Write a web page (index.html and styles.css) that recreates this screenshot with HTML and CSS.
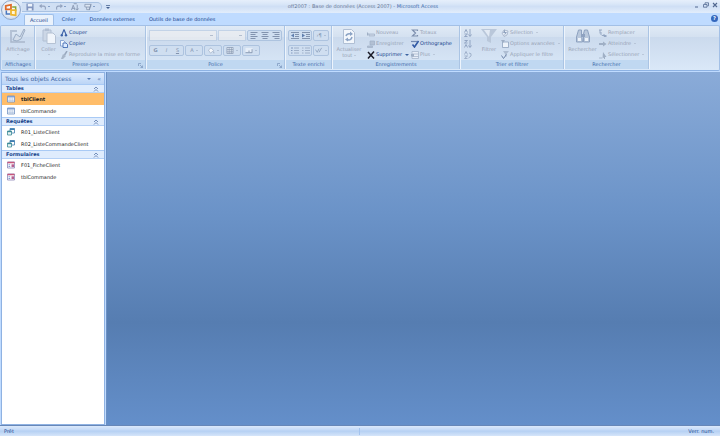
FILE: index.html
```html
<!DOCTYPE html>
<html lang="fr">
<head>
  <meta charset="UTF-8">
  <meta name="viewport" content="width=device-width, initial-scale=1.0">
  <title>off2007 : Base de données (Access 2007) - Microsoft Access</title>
  <link rel="stylesheet" href="styles.css">
</head>
<body>
  <!-- shared icons -->
  <svg class="defs" aria-hidden="true">
    <symbol id="i-table" viewBox="0 0 8 7"><path fill="#fff" stroke="#6f8fc0" stroke-width=".8" d="M.5.5h7v6h-7z"/><path fill="#7f9fd0" d="M.5.5h7V2h-7z"/><path stroke="#9cb4d8" stroke-width=".5" d="M.5 3.5h7M.5 5h7M3 2v4.500M5.200 2v4.500"/></symbol>
    <symbol id="i-query" viewBox="0 0 8 8"><path fill="#fff" stroke="#3f7db0" stroke-width=".8" d="M3 .5h4.500v4.500H3z"/><path fill="#3f7db0" d="M3 .5h4.500V2H3z"/><path fill="#e8f4f4" stroke="#3c8a96" stroke-width=".8" d="M.5 3h4v4h-4z"/><path fill="#3c8a96" d="M.5 3h4v1.200h-4z"/></symbol>
    <symbol id="i-form" viewBox="0 0 8 7"><path fill="#fff" stroke="#8d87b8" stroke-width=".8" d="M.5.5h7v6h-7z"/><path fill="#c8577c" d="M.5.3h7v1.500h-7z"/><path stroke="#5f7fc0" stroke-width=".8" d="M1.500 3.300h1.700M1.500 5h1.700"/><path fill="#b65f90" d="M4.500 2.800H7v2.800H4.500z"/></symbol>
    <symbol id="i-up" viewBox="0 0 6 6"><path fill="none" stroke="#5876a8" stroke-width=".8" d="M1 3l2-2 2 2M1 5.500l2-2 2 2"/></symbol>
    <symbol id="i-launch" viewBox="0 0 5 5"><path fill="none" stroke="#7893ba" stroke-width=".7" d="M.5 3V.5H3M2 2l2.500 2.500M4.500 2.500v2h-2"/></symbol>
  </svg>

  <header class="titlebar">
    <div class="quick">
      <button aria-label="Enregistrer"><svg viewBox="0 0 9 9"><path fill="#8195bf" d="M.5.500h7.500l.5.500v7.500h-8z"/><path fill="#eef4fc" d="M2 1h5v3H2zM2.500 6h4v2.500h-4z"/></svg></button>
      <button class="caret" aria-label="Annuler"><svg viewBox="0 0 9 9"><path fill="none" stroke="#93a3bf" stroke-width="1.300" d="M2 3.500h3q3 0 2 4"/><path fill="#93a3bf" d="M0 3.500L3 1v5z"/></svg></button>
      <button class="caret" aria-label="Rétablir"><svg viewBox="0 0 9 9"><path fill="none" stroke="#93a3bf" stroke-width="1.300" d="M7 3.500H4q-3 0-2 4"/><path fill="#93a3bf" d="M9 3.500L6 1v5z"/></svg></button>
      <button aria-label="Trier"><svg viewBox="0 0 9 9"><path fill="none" stroke="#8595b0" stroke-width="1" d="M.5 8L2.500 2.500 4.500 8M1.200 6h2.600M3 .8h3.500M7 2v6M5.500 6.200L7 8l1.500-1.800"/></svg></button>
      <button class="caret" aria-label="Aperçu"><svg viewBox="0 0 9 9"><path fill="#dce6f3" stroke="#8595b0" stroke-width=".9" d="M1 1.500h6.500v3H1zM3 4.500v3h3v-3"/><path stroke="#8595b0" stroke-width="1" d="M8 1L6 8"/></svg></button>
    </div>
    <button class="customize" aria-label="Personnaliser"><svg viewBox="0 0 4 4"><path fill="#45618f" d="M0 0h4v.8H0zM0 2h4L2 4z"/></svg></button>
    <h1>off2007 : Base de données (Access 2007) - <span>Microsoft Access</span></h1>
    <div class="window-buttons">
      <button aria-label="Réduire"><svg viewBox="0 0 6 6"><path stroke="#526890" stroke-width="1" d="M1 5h3"/></svg></button>
      <button aria-label="Restaurer"><svg viewBox="0 0 6 6"><path fill="none" stroke="#526890" stroke-width=".8" d="M2 2V.8h3.500v3H4.500M.5 2.500H4v2.700H.5z"/></svg></button>
      <button aria-label="Fermer"><svg viewBox="0 0 6 6"><path stroke="#526890" stroke-width="1.100" d="M1 1l4 4M5 1L1 5"/></svg></button>
    </div>
  </header>
  <button class="office" aria-label="Bouton Office">
    <svg viewBox="0 0 12 12"><path fill="none" stroke="#e06a28" stroke-width="1.500" d="M1.500 2.500l4.500-1v4H1.500z"/><path fill="none" stroke="#82a83c" stroke-width="1.300" d="M7 3.500h3V7"/><path fill="none" stroke="#4a78c0" stroke-width="1.300" d="M2 6.500v3h3.500"/><path fill="#fff6d8" stroke="#eeb52c" stroke-width="1.500" d="M6 6h4v4.500L6 10z"/></svg>
  </button>

  <nav class="tabs">
    <button class="tab active">Accueil</button>
    <button class="tab">Créer</button>
    <button class="tab">Données externes</button>
    <button class="tab">Outils de base de données</button>
    <button class="help" aria-label="Aide">?</button>
  </nav>

  <div class="ribbon">
    <section class="group views">
      <div class="tools">
        <button class="big" disabled>
          <svg viewBox="0 0 16 16"><path fill="none" stroke="#a9b7cb" stroke-width="1.500" d="M1 2v12h14"/><path fill="#d4deeb" stroke="#9badc5" d="M3 12l3-6 4 3 4-8 1 1-4 9-4 2z"/><path fill="#b4c2d5" d="M1 2h6v2H1z"/></svg>
          <span>Affichage</span><i class="arrow"></i>
        </button>
      </div>
      <h2>Affichages</h2>
    </section>

    <section class="group clipboard">
      <div class="tools">
        <button class="big" disabled>
          <svg viewBox="0 0 16 16"><path fill="#ccd7e6" stroke="#b1bfd3" d="M2 2h8v11H2z"/><path fill="#b1bfd3" d="M4 .5h4V3H4z"/><path fill="#f0f5fb" stroke="#b5c2d4" d="M6 5h6l2.500 2.500v8H6z"/></svg>
          <span>Coller</span><i class="arrow"></i>
        </button>
        <div class="stack">
          <button><svg viewBox="0 0 8 8"><path fill="none" stroke="#3c62a8" stroke-width="1.100" d="M4 .5L2 5.500M4 .5l2 5"/><circle cx="1.800" cy="6.300" r="1.200" fill="#3c62a8"/><circle cx="6" cy="6.300" r="1.200" fill="#3c62a8"/></svg>Couper</button>
          <button><svg viewBox="0 0 8 8"><path fill="#f4f9ff" stroke="#678bc5" stroke-width=".7" d="M.5.500h3L5 2v4H.500z"/><path fill="#dceaff" stroke="#315eaa" stroke-width=".8" d="M3 3h3l1.500 1.500v3H3z"/></svg>Copier</button>
          <button disabled><svg viewBox="0 0 8 8"><path stroke="#98a7bd" stroke-width="1.500" d="M7 0L4.500 4"/><path fill="#a8b6c9" d="M3 3l3 2-3 3H1z"/></svg>Reproduire la mise en forme</button>
        </div>
      </div>
      <h2>Presse-papiers<svg class="launch"><use href="#i-launch"/></svg></h2>
    </section>

    <section class="group font">
      <div class="tools rows">
        <div class="row">
          <select class="font-name" aria-label="Police" disabled><option></option></select>
          <select class="font-size" aria-label="Taille" disabled><option></option></select>
          <div class="set">
            <button disabled aria-label="Gauche"><svg viewBox="0 0 7 7"><path stroke="#8293ae" d="M0 .5h7M0 2.500h5M0 4.500h7M0 6.500h5"/></svg></button>
            <button disabled aria-label="Centrer"><svg viewBox="0 0 7 7"><path stroke="#8293ae" d="M0 .5h7M1 2.500h5M0 4.500h7M1 6.500h5"/></svg></button>
            <button disabled aria-label="Droite"><svg viewBox="0 0 7 7"><path stroke="#8293ae" d="M0 .5h7M2 2.500h5M0 4.500h7M2 6.500h5"/></svg></button>
          </div>
        </div>
        <div class="row">
          <div class="set">
            <button disabled><b>G</b></button>
            <button disabled><em>I</em></button>
            <button disabled><u>S</u></button>
          </div>
          <div class="set"><button class="caret" disabled>A</button></div>
          <div class="set"><button class="caret" disabled aria-label="Remplissage"><svg viewBox="0 0 8 8"><path fill="#f5f8fc" stroke="#9fafc6" stroke-width=".8" d="M1 3.500L4 1l3 3-3.500 3z"/><path fill="#9fafc6" d="M7 4l1 3H6.500z"/></svg></button></div>
          <div class="set"><button class="caret" disabled aria-label="Quadrillage"><svg viewBox="0 0 8 8"><path fill="#e6eef8" stroke="#8293ae" stroke-width=".8" d="M.5.500h7v7h-7zM.5 3h7M.5 5.500h7M3 .5v7M5.500.500v7"/></svg></button></div>
          <div class="set"><button class="caret" disabled aria-label="Autre couleur"><svg viewBox="0 0 8 8"><path fill="#e6eef8" d="M0 1h8v5H0z"/><path fill="none" stroke="#8293ae" d="M0 6.500h7.500v-4M4 4v2"/></svg></button></div>
        </div>
      </div>
      <h2>Police<svg class="launch"><use href="#i-launch"/></svg></h2>
    </section>

    <section class="group rich">
      <div class="tools rows">
        <div class="row">
          <div class="set">
            <button disabled aria-label="Diminuer le retrait"><svg viewBox="0 0 8 7"><path stroke="#8293ae" d="M0 .5h8M4 2.500h4M4 4.500h4M0 6.500h8"/><path fill="#607fae" d="M0 3.500L3 1.500v4z"/></svg></button>
            <button disabled aria-label="Augmenter le retrait"><svg viewBox="0 0 8 7"><path stroke="#8293ae" d="M0 .5h8M4 2.500h4M4 4.500h4M0 6.500h8"/><path fill="#607fae" d="M3 3.500L0 1.500v4z"/></svg></button>
          </div>
          <div class="set"><button class="caret" disabled>›¶</button></div>
        </div>
        <div class="row">
          <div class="set">
            <button disabled aria-label="Numérotation"><svg viewBox="0 0 8 7"><path stroke="#94a6c0" stroke-width=".8" d="M3 1h5M3 3.500h5M3 6h5"/><path stroke="#7089b2" stroke-width=".8" d="M1 0v2M0 3.500h1.500M0 6h1.500"/></svg></button>
            <button disabled aria-label="Puces"><svg viewBox="0 0 8 7"><path stroke="#94a6c0" stroke-width=".8" d="M3 1h5M3 3.500h5M3 6h5M0 1h1.500M0 3.500h1.500M0 6h1.500"/></svg></button>
          </div>
          <div class="set"><button class="caret" disabled aria-label="Surbrillance"><svg viewBox="0 0 8 8"><path fill="none" stroke="#8fa2be" d="M0 3l2 3 2-4M4 6l3-5"/></svg></button></div>
        </div>
      </div>
      <h2>Texte enrichi</h2>
    </section>

    <section class="group records">
      <div class="tools">
        <button class="big" disabled>
          <svg viewBox="0 0 16 16"><path fill="#f3f7fc" stroke="#b0bfd4" d="M2.500 1.500h8l3 3v11h-11z"/><path fill="none" stroke="#8ba3c5" stroke-width="1.500" d="M5 8q1-3 5-2M11 9q-1 4-5 2.500"/><path fill="#8ba3c5" d="M9 3.500l3 2.500-3 2zM7 9.500v4L4 11.500z"/></svg>
          <span>Actualiser</span><span>tout <i class="arrow"></i></span>
        </button>
        <div class="stack">
          <button disabled><svg viewBox="0 0 8 8"><path fill="#cbd6e5" stroke="#9fafc5" stroke-width=".7" d="M2 5h5.500v2H2z"/><path fill="#9fafc5" d="M0 3l2 2-2 2z"/></svg>Nouveau</button>
          <button disabled><svg viewBox="0 0 8 8"><path fill="#b3c0d3" stroke="#9fafc5" stroke-width=".7" d="M3 1h4.500v4H3zM.5 6h5v1.500h-5z"/></svg>Enregistrer</button>
          <button><svg viewBox="0 0 8 8"><path fill="none" stroke="#1c1c28" stroke-width="1.500" d="M1 1l6 6.500M7 .5L1 7.500"/></svg>Supprimer<i class="arrow"></i></button>
        </div>
        <div class="stack">
          <button disabled><svg viewBox="0 0 8 8"><path fill="none" stroke="#7d8fae" stroke-width="1.200" d="M6.500 2V1H1.500L4.500 4l-3 3h5V6"/></svg>Totaux</button>
          <button><svg viewBox="0 0 8 8"><path stroke="#7288b0" stroke-width="1.200" d="M0 1.500h6"/><path fill="none" stroke="#3159a4" stroke-width="1.600" d="M1.500 4.500l2 2.500 4-6"/></svg>Orthographe</button>
          <button disabled><svg viewBox="0 0 8 8"><path fill="#e6edf7" stroke="#9fafc5" stroke-width=".7" d="M1 .5h6.500v7H1zM1 3h6.500M1 5.500h6.500"/><path fill="#9fafc5" d="M0 3h3v2.500H0z"/></svg>Plus<i class="arrow"></i></button>
        </div>
      </div>
      <h2>Enregistrements</h2>
    </section>

    <section class="group sort">
      <div class="tools">
        <div class="stack icons">
          <button disabled aria-label="Croissant"><svg viewBox="0 0 8 8"><path fill="none" stroke="#8c9fbe" stroke-width=".9" d="M.5 3.500l1.500-3 1.500 3M.5 5h3l-3 2.500h3M6 0v7M4.500 5.500L6 7.500l1.500-2"/></svg></button>
          <button disabled aria-label="Décroissant"><svg viewBox="0 0 8 8"><path fill="none" stroke="#8c9fbe" stroke-width=".9" d="M.5.500h3l-3 2.500h3M.5 7.500L2 4.500l1.500 3M6 0v7M4.500 5.500L6 7.500l1.500-2"/></svg></button>
          <button disabled aria-label="Effacer les tris"><svg viewBox="0 0 8 8"><path fill="none" stroke="#9aabc6" stroke-width=".9" d="M.5 3.500l1.500-3 1.500 3M.5 5h3l-3 2.500h3M5 2q3 0 2 3L4.500 7"/></svg></button>
        </div>
        <button class="big" disabled>
          <svg viewBox="0 0 16 16"><path fill="#b9c7da" d="M0 1h16l-6 8v6l-4-2V9z"/><path fill="#e2eaf4" d="M3 2h6L8 9z"/></svg>
          <span>Filtrer</span>
        </button>
        <div class="stack">
          <button disabled><svg viewBox="0 0 8 8"><path fill="#e8eff8" stroke="#9fafc5" stroke-width=".8" d="M1 4l2-3 4 1-1 4-3 1.500z"/><path fill="#8fa2be" d="M4 0l-2 4h2L3 7l3-4H4z"/></svg>Sélection<i class="arrow"></i></button>
          <button disabled><svg viewBox="0 0 8 8"><path fill="#edf3fa" stroke="#8fa2be" stroke-width=".8" d="M1.500 2h6v5.500h-6z"/><path fill="#9fafc5" d="M0 0h4L2.500 2.500h-1z"/></svg>Options avancées<i class="arrow"></i></button>
          <button disabled><svg viewBox="0 0 8 8"><path fill="#aebdd2" d="M2 0h6L5.500 3v3L4 5V3z"/><path fill="none" stroke="#7187ab" d="M.5 4.500l2 3 3-4"/></svg>Appliquer le filtre</button>
        </div>
      </div>
      <h2>Trier et filtrer</h2>
    </section>

    <section class="group search">
      <div class="tools">
        <button class="big" disabled>
          <svg viewBox="0 0 16 16"><path fill="#b9c8dc" stroke="#8ea2c0" d="M3.500 2h3v4l1 8h-6V9zM9.500 2h3l2 7v5H8.500V6z"/><path fill="#8ea2c0" d="M6 6h4v3H6z"/><path fill="#edf3fa" d="M3 10h3v3H3zM10 10h3v3h-3z"/></svg>
          <span>Rechercher</span>
        </button>
        <div class="stack">
          <button disabled><svg viewBox="0 0 8 8"><path fill="none" stroke="#8fa2be" stroke-width=".9" d="M0 1h3M1 1v3h2M1 4.500l2 2h4.500M5 5v2.500h2.500"/></svg>Remplacer</button>
          <button disabled><svg viewBox="0 0 8 8"><path fill="#9fafc5" d="M0 3h4V1.500L7.500 4 4 6.500V5H0z"/></svg>Atteindre<i class="arrow"></i></button>
          <button disabled><svg viewBox="0 0 8 8"><path fill="#9fafc5" d="M4 1l3.500 5H6v2H5V6.500L3.500 7.500z"/><path stroke="#9fafc5" stroke-width=".8" d="M0 7h3"/></svg>Sélectionner<i class="arrow"></i></button>
        </div>
      </div>
      <h2>Rechercher</h2>
    </section>
  </div>

  <main class="work">
    <aside class="nav">
      <div class="nav-title">
        <span>Tous les objets Access</span>
        <button aria-label="Filtrer la liste"><i class="arrow"></i></button>
        <button class="collapse" aria-label="Réduire le volet">«</button>
      </div>
      <h3>Tables<svg><use href="#i-up"/></svg></h3>
      <a class="selected" href="#"><svg><use href="#i-table"/></svg>tblClient</a>
      <a href="#"><svg><use href="#i-table"/></svg>tblCommande</a>
      <h3>Requêtes<svg><use href="#i-up"/></svg></h3>
      <a href="#"><svg><use href="#i-query"/></svg>R01_ListeClient</a>
      <a href="#"><svg><use href="#i-query"/></svg>R02_ListeCommandeClient</a>
      <h3>Formulaires<svg><use href="#i-up"/></svg></h3>
      <a href="#"><svg><use href="#i-form"/></svg>F01_FicheClient</a>
      <a href="#"><svg><use href="#i-form"/></svg>tblCommande</a>
    </aside>
    <div class="canvas"></div>
  </main>

  <footer class="status">
    <span class="ready">Prêt</span>
    <span class="lock">Verr. num.</span>
  </footer>
</body>
</html>
```
FILE: styles.css
```css
* {
  box-sizing: border-box;
}

body {
  margin: 0;
  height: 100vh;
  display: flex;
  flex-direction: column;
  background: #bfdbff;
  font-family: "DejaVu Sans", sans-serif;
  font-size: 5px;
  line-height: 7px;
  color: #15428b;
  overflow: hidden;
}

button {
  display: flex;
  align-items: center;
  padding: 0;
  border: 0;
  background: none;
  font: inherit;
  color: inherit;
  white-space: nowrap;
}

h1, h2, h3 {
  margin: 0;
  font-size: 5px;
  font-weight: normal;
}

svg {
  display: block;
  flex: none;
  width: 8px;
  height: 8px;
}

.defs {
  position: absolute;
  width: 0;
  height: 0;
}

.arrow,
.caret::after {
  content: "";
  flex: none;
  display: inline-block;
  border: 2px solid transparent;
  border-top-color: currentColor;
  border-bottom: 0;
  margin-left: 2px;
  opacity: 0.8;
}

button:disabled .arrow {
  border-width: 1px;
  border-bottom: 0;
}

/* title bar */
.titlebar {
  display: flex;
  align-items: center;
  height: 13px;
  padding: 0 2px 0 22px;
  background: linear-gradient(#e6effb, #dae7f8 30%, #cfdff5 50%, #e2edfb);
}

.quick {
  display: flex;
  align-items: center;
  gap: 5px;
  height: 10px;
  padding: 0 6px 0 4px;
  border: 1px solid #a9c2e2;
  border-left: 0;
  border-radius: 0 5px 5px 0;
  background: #d0dff3;
}

.quick .caret::after {
  margin-left: 1px;
  border-width: 1px;
  border-bottom: 0;
}

.customize {
  margin-left: 4px;
}

.customize svg {
  width: 4px;
  height: 4px;
}

.titlebar h1 {
  flex: 1;
  padding-right: 78px;
  text-align: center;
  color: #697996;
}

.titlebar h1 span {
  color: #3e6aaa;
}

.window-buttons {
  display: flex;
  gap: 3px;
  padding-bottom: 3px;
}

.window-buttons svg {
  width: 6px;
  height: 6px;
}

.office {
  position: absolute;
  top: 0;
  left: 1px;
  width: 20px;
  height: 20px;
  justify-content: center;
  border: 1px solid #8fa6c8;
  border-radius: 50%;
  background: radial-gradient(circle at 50% 40%, #fff, #e2e9f3 60%, #b3c4dc);
}

.office svg {
  width: 14px;
  height: 14px;
}

/* tabs */
.tabs {
  display: flex;
  align-items: flex-end;
  height: 12px;
  padding: 0 2px 0 24px;
}

.tab {
  height: 11px;
  padding: 0 6px;
  margin-right: 2px;
  border-radius: 2px 2px 0 0;
}

.tab.active {
  padding: 0 5px;
  border: 1px solid #9fbfe8;
  border-bottom: 0;
  background: #eaf2fc;
}

.help {
  justify-content: center;
  width: 7px;
  height: 7px;
  margin: 0 0 3px auto;
  border-radius: 50%;
  background: #3467bd;
  color: #fff;
  font-weight: bold;
}

/* ribbon */
.ribbon {
  display: flex;
  gap: 1px;
  height: 46px;
  padding: 0 1px 1px;
  border: 1px solid #a3c0e6;
  border-bottom-color: #8db2e3;
  border-radius: 2px;
  background: linear-gradient(#e0eaf6, #d4e1f0 25%, #cbdaed 26%, #dae8f8);
}

.group {
  display: flex;
  flex-direction: column;
  flex: none;
  border-right: 1px solid #aac4e4;
  box-shadow: 1px 0 #edf4fc;
}

.views { width: 33px; }
.clipboard { width: 110px; }
.font { width: 138px; }
.rich { width: 46px; }
.records { width: 127px; }
.sort { width: 103px; }
.search { width: 84px; }

.tools {
  display: flex;
  flex: 1;
  padding: 1px 2px 0;
}

.group h2 {
  position: relative;
  height: 9px;
  line-height: 9px;
  text-align: center;
  color: #3e6aaa;
  background: #c0d8f1;
  white-space: nowrap;
}

.launch {
  position: absolute;
  top: 3px;
  right: 2px;
  width: 5px;
  height: 5px;
}

.big {
  flex-direction: column;
  flex: none;
  width: 28px;
  line-height: 6px;
}

.big svg {
  width: 16px;
  height: 16px;
  margin: 1px 0 2px;
}

.big > .arrow {
  margin: 2px 0 0;
}

.big span .arrow {
  margin-left: 0;
  vertical-align: middle;
}

.stack {
  display: flex;
  flex-direction: column;
}

.stack button {
  height: 11px;
  gap: 1px;
}

button:disabled {
  color: #98a3b5;
}

.clipboard .big { width: 21px; }
.clipboard .stack { margin-left: 1px; }
.records .stack { width: 44px; margin-left: 4px; }
.records .stack + .stack { margin-left: 0; }
.sort .icons { width: 14px; }
.sort .big { width: 22px; }
.sort .stack { margin-left: 1px; }
.search .big { width: 31px; }
.search .stack { margin-left: 1px; }

.rows {
  flex-direction: column;
  gap: 4px;
  padding-top: 4px;
}

.row {
  display: flex;
  gap: 1px;
}

select {
  appearance: none;
  height: 11px;
  padding: 0;
  border: 1px solid #b9cbe2;
  border-radius: 0;
  background: #eeeff1 linear-gradient(#a5b0c0, #a5b0c0) no-repeat right 3px center / 3px 1px;
}

.font-name { width: 69px; }
.font-size { width: 29px; }

.set {
  display: flex;
  height: 11px;
  border: 1px solid #adc3df;
  border-radius: 2px;
  background: #cfdef0;
}

.set button {
  justify-content: center;
  width: 11px;
  color: #8293ae;
}

.set .caret {
  width: 16px;
}

.set .caret::after {
  margin-left: 2px;
  border-width: 1px;
  border-bottom: 0;
}

.set svg {
  width: 8px;
  height: 7px;
}

.rich .set .caret {
  width: 14px;
}

/* work area */
.work {
  display: flex;
  flex: 1;
  padding: 1px 0 0 1px;
}

.nav {
  flex: none;
  width: 104px;
  border: 1px solid #8fb2e2;
  background: #fff;
  color: #222;
}

.nav-title {
  display: flex;
  align-items: center;
  height: 11px;
  padding: 0 3px;
  background: linear-gradient(#dceafd, #bcd5f6);
  font-size: 6px;
  color: #3f66a4;
}

.nav-title span {
  flex: 1;
}

.nav-title .collapse {
  margin-left: 6px;
}

.nav h3 {
  display: flex;
  align-items: center;
  justify-content: space-between;
  height: 9px;
  padding: 0 5px 0 4px;
  border-top: 1px solid #a9caf5;
  border-bottom: 1px solid #b5d1f6;
  background: #dfecfd;
  color: #15428b;
  font-weight: bold;
}

.nav h3 svg {
  width: 6px;
  height: 6px;
}

.nav a {
  display: flex;
  align-items: center;
  gap: 6px;
  height: 12px;
  padding-left: 5px;
  color: inherit;
  text-decoration: none;
}

.nav .selected {
  background: #ffbd69;
  font-weight: bold;
}

.canvas {
  flex: 1;
  margin-left: 1px;
  border-left: 1px solid #6b90c4;
  background: linear-gradient(#8aabd8, #6b93c8 40%, #567db1 71%, #648fca);
}

.status {
  display: flex;
  align-items: center;
  height: 11px;
  padding: 0 6px 0 4px;
  border-top: 1px solid #6787b8;
  background: linear-gradient(#dbe9fb, #c3d9f7 40%, #b5d0f3 50%, #d5e5fa);
}

.status span {
  flex: 1;
}

.status .lock {
  border-left: 1px solid #a3c3ee;
  text-align: right;
}
```
